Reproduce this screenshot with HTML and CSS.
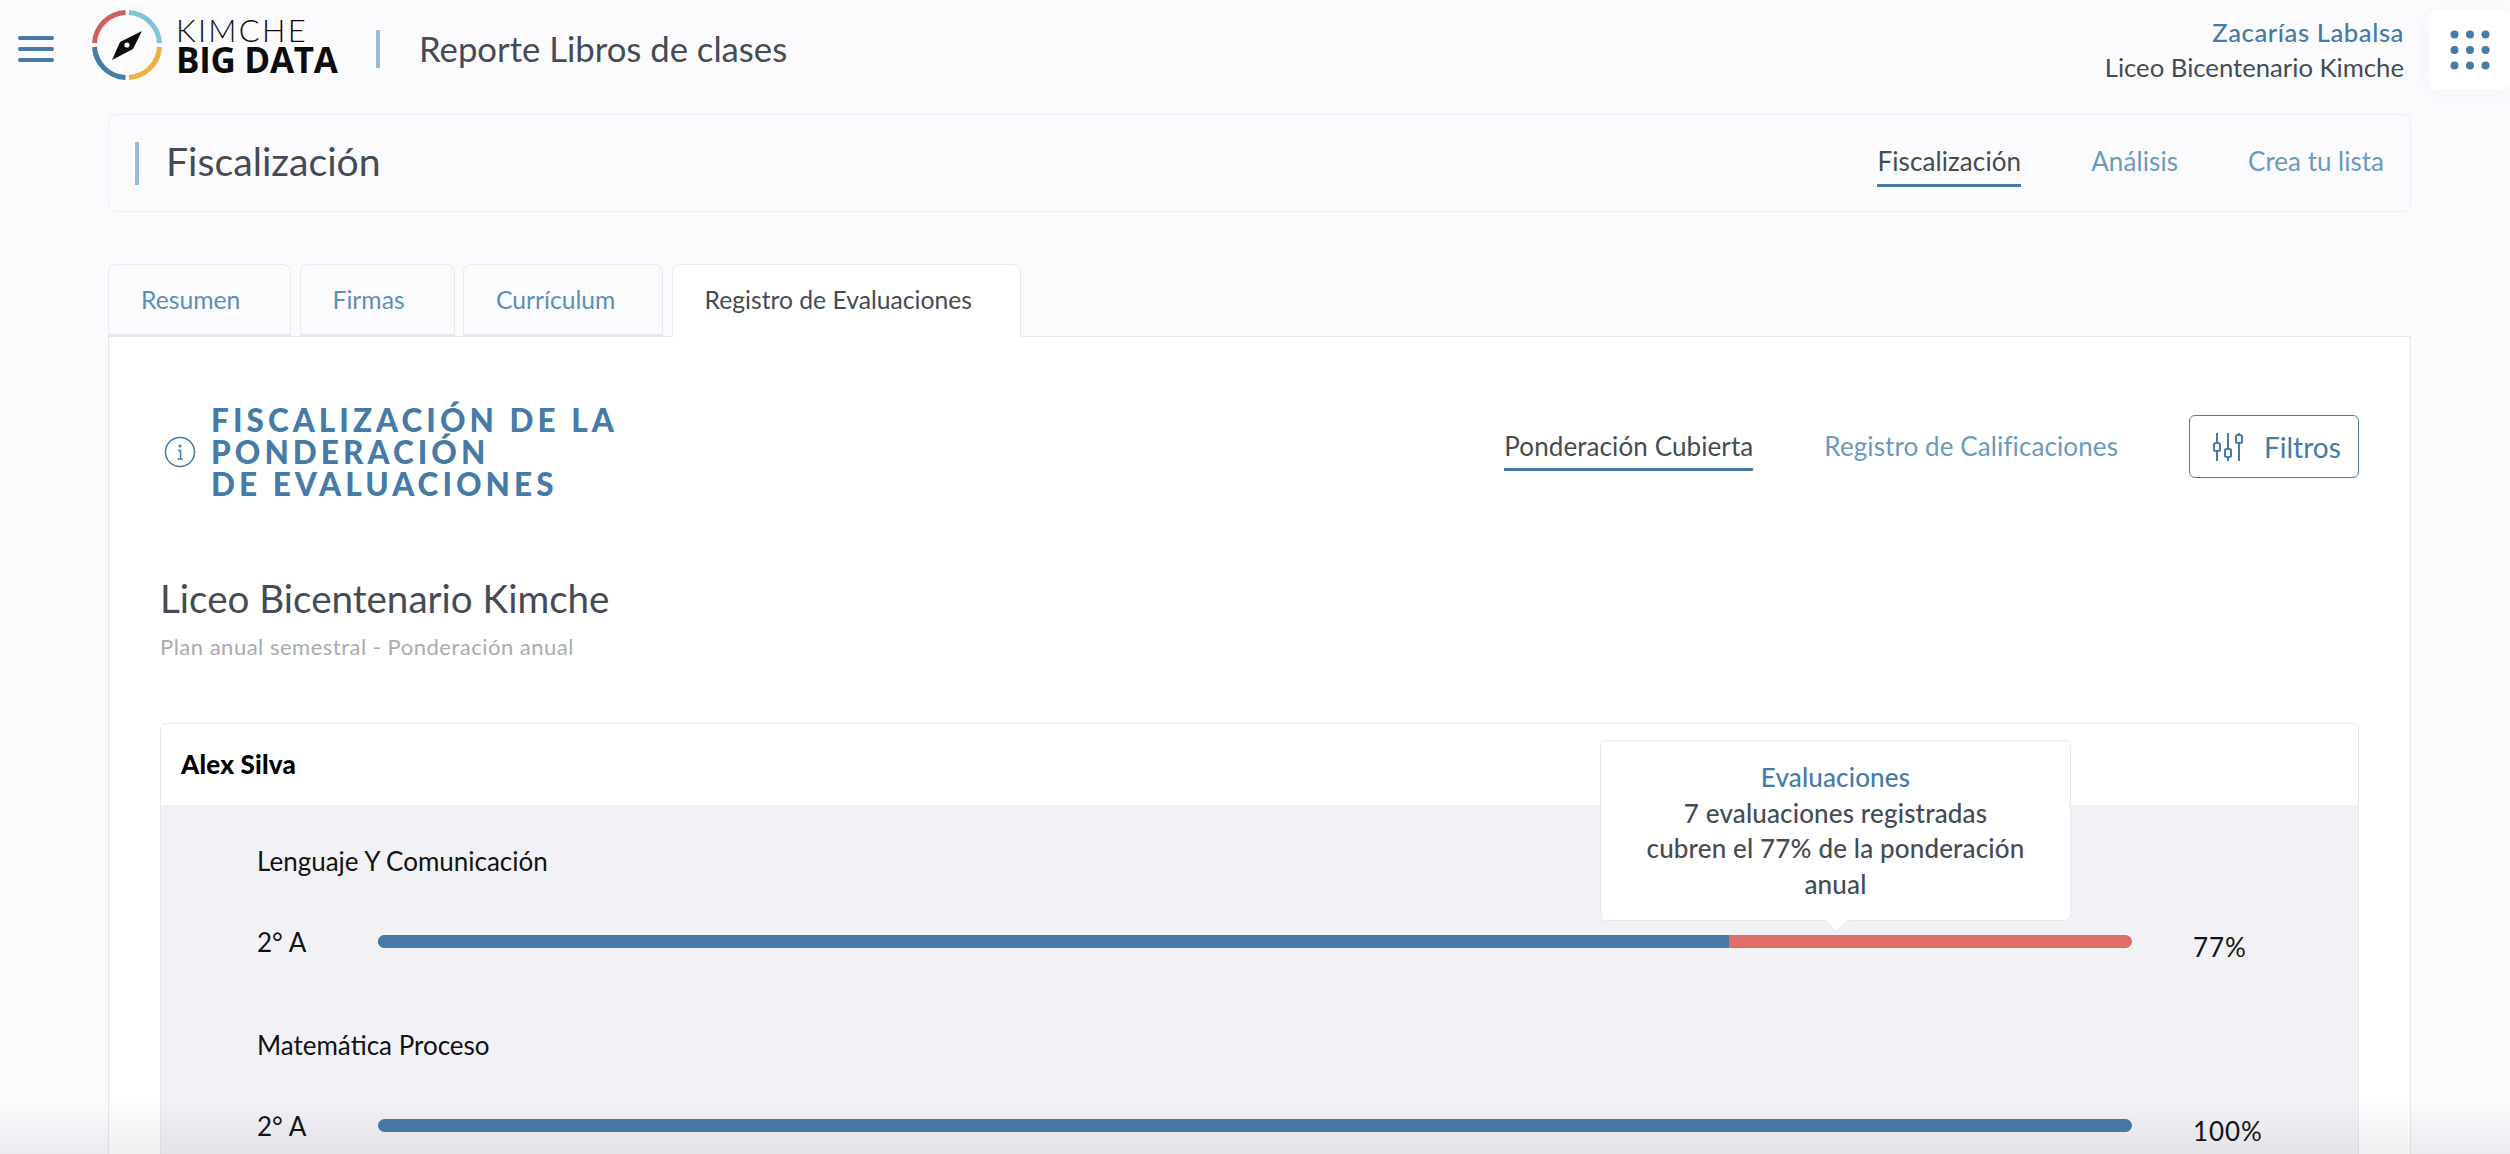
FILE: index.html
```html
<!DOCTYPE html>
<html lang="es">
<head>
<meta charset="utf-8">
<title>Reporte Libros de clases</title>
<link rel="stylesheet" href="styles.css">
</head>
<body>
<header class="topbar">
  <svg class="burger" viewBox="0 0 36 26"><path d="M2 2h32M2 13h32M2 24h32"/></svg>
  <svg class="logo-mark" viewBox="0 0 70 70">
    <g class="ring">
      <path class="r1" d="M2.5 33A32.5 32.5 0 0 1 33.5 2.5"/>
      <path class="r2" d="M37 2.5A32.5 32.5 0 0 1 67.5 33"/>
      <path class="r3" d="M67.5 37A32.5 32.5 0 0 1 37 67.5"/>
      <path class="r4" d="M33.500 67.500A32.500 32.500 0 0 1 2.500 37"/>
    </g>
    <path d="M50 21L28 32L20 50L41 39Z" fill="#0c0c0c"/>
    <circle cx="35" cy="35" r="2.600" fill="#fff"/>
  </svg>
  <div class="logo-text"><span class="logo-top">KIMCHE</span><span class="logo-bottom">BIG DATA</span></div>
  <div class="app-title">Reporte Libros de clases</div>
  <div class="user">
    <div class="user-name">Zacarías Labalsa</div>
    <div class="user-school">Liceo Bicentenario Kimche</div>
  </div>
  <div class="apps">
    <svg viewBox="0 0 40 40"><g fill="#457ba6"><circle cx="4.500" cy="4.500" r="4"/><circle cx="20" cy="4.500" r="4"/><circle cx="35.500" cy="4.500" r="4"/><circle cx="4.500" cy="20" r="4"/><circle cx="20" cy="20" r="4"/><circle cx="35.500" cy="20" r="4"/><circle cx="4.500" cy="35.500" r="4"/><circle cx="20" cy="35.500" r="4"/><circle cx="35.500" cy="35.500" r="4"/></g></svg>
  </div>
</header>

<main class="page">
  <section class="section-bar">
    <h1 class="section-title">Fiscalización</h1>
    <nav class="section-nav">
      <a class="link active">Fiscalización</a>
      <a class="link">Análisis</a>
      <a class="link">Crea tu lista</a>
    </nav>
  </section>

  <div class="tabs">
    <a class="tab tab-1">Resumen</a>
    <a class="tab tab-2">Firmas</a>
    <a class="tab tab-3">Currículum</a>
    <a class="tab tab-4 current">Registro de Evaluaciones</a>
  </div>

  <section class="card">
    <div class="card-head">
      <div class="heading">
        <svg class="info" viewBox="0 0 32 32"><circle cx="16" cy="16" r="14.500"/><path d="M14 14.500h2.500v8M13.500 23h5.500"/><circle class="info-dot" cx="16" cy="10" r="1.500"/></svg>
        <h2 class="heading-text">FISCALIZACIÓN DE LA<br>PONDERACIÓN<br>DE EVALUACIONES</h2>
      </div>
      <div class="head-actions">
        <a class="view active">Ponderación Cubierta</a>
        <a class="view">Registro de Calificaciones</a>
        <button class="filter">
          <svg viewBox="0 0 30 30"><path d="M4 1v10M4 19v10M15 1v16M15 25v4M26 1v2M26 11v18"/><rect x="1" y="11" width="6" height="8" rx="1.500"/><rect x="12" y="17" width="6" height="8" rx="1.500"/><rect x="23" y="3" width="6" height="8" rx="1.500"/></svg>
          <span>Filtros</span>
        </button>
      </div>
    </div>

    <h3 class="school">Liceo Bicentenario Kimche</h3>
    <p class="plan">Plan anual semestral - Ponderación anual</p>

    <div class="teacher">
      <div class="teacher-name">Alex Silva</div>
      <div class="teacher-body">
        <div class="subject">
          <div class="subject-name">Lenguaje Y Comunicación</div>
          <div class="progress-row">
            <span class="grade">2° A</span>
            <div class="bar"><div class="fill" style="width:77%"></div></div>
            <span class="pct">77%</span>
          </div>
        </div>
        <div class="subject">
          <div class="subject-name">Matemática Proceso</div>
          <div class="progress-row">
            <span class="grade">2° A</span>
            <div class="bar"><div class="fill" style="width:100%"></div></div>
            <span class="pct">100%</span>
          </div>
        </div>
      </div>
      <div class="tooltip">
        <div class="tooltip-title">Evaluaciones</div>
        <div>7 evaluaciones registradas</div>
        <div>cubren el 77% de la ponderación</div>
        <div>anual</div>
      </div>
    </div>
  </section>
</main>
<div class="bottom-shade"></div>
</body>
</html>
```

FILE: styles.css
```css
* { box-sizing: border-box; }
html, body { margin: 0; height: 1154px; overflow: hidden; }
body {
  background: #fbfbfe;
  font-family: "Lato", "Noto Sans", sans-serif;
  color: #444b55;
  position: relative;
}
a { text-decoration: none; }

.topbar { height: 90px; display: flex; align-items: center; padding-left: 18px; }
.burger { width: 36px; height: 26px; margin-top: 8px; flex: none; }
.burger path { fill: none; stroke: #457ba6; stroke-width: 4; stroke-linecap: round; }
.logo-mark { width: 70px; height: 70px; margin-left: 38px; flex: none; }
.ring path { fill: none; stroke-width: 5; }
.r1 { stroke: #cd5f5f; }
.r2 { stroke: #7cc6d8; }
.r3 { stroke: #ecb143; }
.r4 { stroke: #457ba6; }
.logo-text { margin-left: 14px; width: 200px; display: flex; flex-direction: column; color: #0c0c0c; }
.logo-top { font: 300 31px/28px "Lato", sans-serif; letter-spacing: 2.300px; }
.logo-bottom { font: 700 35px/28px "Open Sans", sans-serif; letter-spacing: -0.300px; margin-top: 2px; }
.app-title {
  font-size: 34.700px;
  line-height: 38px;
  border-left: 4px solid #97bdd4;
  padding-left: 39px;
  margin-top: 7px;
}
.user { margin-left: auto; text-align: right; font-size: 25.700px; line-height: 35px; margin-top: 9px; padding-right: 25px; }
.user-name { color: #457ba6; font-weight: 500; letter-spacing: .55px; }
.apps {
  width: 81px;
  height: 80px;
  align-self: flex-end;
  background: #fff;
  border-radius: 8px;
  box-shadow: 0 4px 16px rgba(60, 70, 110, .05);
  display: flex;
  align-items: center;
  justify-content: center;
}
.apps svg { width: 40px; height: 40px; }

.page { padding: 24px 99px 0 108px; }
.section-bar {
  height: 98px;
  border: 1px solid #eff0f5;
  border-radius: 8px;
  display: flex;
  align-items: center;
  justify-content: space-between;
  padding: 0 26px 0 26px;
}
.section-title {
  margin: 0;
  font-size: 39.200px;
  font-weight: 400;
  line-height: 37px;
  padding-bottom: 6px;
  border-left: 4px solid #97bdd4;
  padding-left: 27px;
}
.section-nav { display: flex; gap: 70px; font-size: 26px; letter-spacing: .1px; }
.link { color: #6a9abc; height: 46px; line-height: 40px; margin-top: 2px; }
.link:last-child { letter-spacing: 0; }
.link.active { color: #444b55; border-bottom: 3px solid #457ba6; }

.tabs { display: flex; gap: 8.500px; margin-top: 52px; height: 73px; position: relative; z-index: 1; }
.tab {
  border: 1px solid #e9ebf0;
  border-bottom: 3px solid #e6e8ee;
  border-radius: 8px 8px 0 0;
  color: #5b90b6;
  font-size: 24.700px;
  line-height: 70px;
  padding-left: 32px;
  background: #fbfbfe;
}
.tab-1 { width: 183px; }
.tab-2 { width: 155px; }
.tab-3 { width: 200px; }
.tab-4 { width: 349px; }
.tab.current { color: #444b55; background: #fff; border-bottom: 0; }

.card {
  background: #fff;
  border: 1px solid #e6e8ee;
  margin-top: -1px;
  padding: 0 51px 0 51px;
  height: 900px;
}
.card-head { display: flex; justify-content: space-between; padding-top: 65px; }
.heading { display: flex; align-items: center; gap: 15px; margin: 2px 0 0 4px; }
.info { width: 32px; height: 32px; flex: none; }
.info circle, .info path { fill: none; stroke: #457ba6; stroke-width: 1.500; }
.info .info-dot { fill: #457ba6; stroke: none; }
.heading-text {
  margin: 0;
  font-size: 31.500px;
  line-height: 32px;
  font-weight: 900;
  letter-spacing: 4.050px;
  color: #457ba6;
}
.head-actions { display: flex; align-items: flex-start; margin-top: 13px; font-size: 26px; }
.view { color: #6a9abc; height: 56px; padding-top: 11px; line-height: 40px; margin-right: 71px; letter-spacing: .1px; }
.view.active { color: #444b55; border-bottom: 3px solid #457ba6; }
.filter {
  width: 170px;
  height: 63px;
  border: 1px solid #457ba6;
  border-radius: 6px;
  background: #fff;
  color: #457ba6;
  font: 400 28px "Lato", sans-serif;
  display: flex;
  align-items: center;
  gap: 21px;
  padding: 0 0 0 23px;
}
.filter svg { width: 30px; height: 30px; flex: none; }
.filter path, .filter rect { fill: none; stroke: #457ba6; stroke-width: 2; }

.school { margin: 76px 0 0; font-size: 38.600px; line-height: 44px; font-weight: 400; }
.plan { margin: 13px 0 0; font-size: 22px; line-height: 28px; color: #a9abb0; letter-spacing: .5px; }

.teacher {
  position: relative;
  margin-top: 62px;
  border: 1px solid #e6e8ee;
  border-radius: 6px 6px 0 0;
}
.teacher-name { height: 81px; padding-left: 20px; font-size: 26px; font-weight: 900; line-height: 80px; color: #000; background: #fff; border-radius: 6px 6px 0 0; letter-spacing: .2px; }
.teacher-body { background: #f1f1f6; padding: 39px 0 0 96px; height: 400px; color: #111; }
.subject { height: 184px; font-size: 26px; }
.subject-name { line-height: 34px; }
.progress-row { display: grid; grid-template-columns: 121px 1fr 226px; align-items: center; height: 34px; margin-top: 42px; }
.bar { height: 13px; border-radius: 7px; background: #e16d67; overflow: hidden; }
.fill { height: 100%; background: #457ba6; }
.pct { padding-left: 61px; margin-top: 11px; letter-spacing: .9px; }

.tooltip {
  position: absolute;
  left: 1439px;
  top: 16px;
  width: 471px;
  height: 181px;
  background: #fff;
  border: 1px solid #e6e8ee;
  border-radius: 6px;
  text-align: center;
  font-size: 26px;
  line-height: 35.500px;
  font-weight: 500;
  letter-spacing: .15px;
  color: #444b55;
  padding-top: 19px;
}
.tooltip-title { color: #457ba6; }
.tooltip::after {
  content: "";
  position: absolute;
  left: 50%;
  bottom: -9px;
  width: 16px;
  height: 16px;
  margin-left: -8px;
  background: #fff;
  border-right: 1px solid #e6e8ee;
  border-bottom: 1px solid #e6e8ee;
  transform: rotate(45deg);
}

.bottom-shade {
  position: absolute;
  left: 0;
  right: 0;
  bottom: 0;
  height: 56px;
  background: linear-gradient(to bottom, rgba(60, 60, 70, 0), rgba(60, 60, 70, .08));
  pointer-events: none;
}
```
